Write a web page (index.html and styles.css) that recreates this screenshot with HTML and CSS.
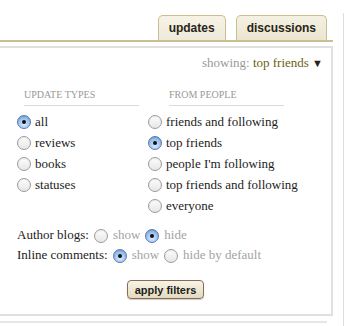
FILE: index.html
```html
<!DOCTYPE html>
<html lang="en">
<head>
    <meta charset="UTF-8">
    <meta name="viewport" content="width=device-width, initial-scale=1.0">
    <title>Updates Filter</title>
    <link rel="stylesheet" href="styles.css">
</head>
<body>

    <div class="page">
        <div class="main">
            <!-- Tabs -->
            <div class="tabs">
                <a href="#" class="tab active">updates</a>
                <a href="#" class="tab">discussions</a>
            </div>

            <!-- Filter panel -->
            <div class="panel">
                <div class="showing">showing: <a href="#">top friends</a> <span class="arrow">&#9660;</span></div>

                <div class="filters">
                    <div class="col col-types">
                        <h5>Update types</h5>
                        <label class="opt"><span class="radio on"></span>all</label>
                        <label class="opt"><span class="radio"></span>reviews</label>
                        <label class="opt"><span class="radio"></span>books</label>
                        <label class="opt"><span class="radio"></span>statuses</label>
                    </div>
                    <div class="col col-people">
                        <h5>From people</h5>
                        <label class="opt"><span class="radio"></span>friends and following</label>
                        <label class="opt"><span class="radio on"></span>top friends</label>
                        <label class="opt"><span class="radio"></span>people I'm following</label>
                        <label class="opt"><span class="radio"></span>top friends and following</label>
                        <label class="opt"><span class="radio"></span>everyone</label>
                    </div>
                </div>

                <div class="setting">
                    <span>Author blogs:</span>
                    <span class="radio"></span><span class="dim">show</span>
                    <span class="radio on"></span><span class="dim">hide</span>
                </div>
                <div class="setting">
                    <span>Inline comments:</span>
                    <span class="radio on"></span><span class="dim">show</span>
                    <span class="radio"></span><span class="dim">hide by default</span>
                </div>

                <div class="actions">
                    <button>apply filters</button>
                </div>
            </div>

            <div class="next"></div>
        </div>
        <div class="side"></div>
    </div>

</body>
</html>
```

FILE: styles.css
```css
body {
    font-family: "Liberation Serif", "Times New Roman", serif;
    font-size: 13px;
    color: #1c1c1c;
    margin: 0;
    padding: 0;
    background-color: white;
}

.page {
    display: flex;
    min-height: 326px;
}

.main {
    width: 333px;
}

.side {
    margin-left: 10px;
    margin-top: 13px;
    border-left: 1px solid #dedede;
}

/* Tabs */
.tabs {
    display: flex;
    justify-content: flex-end;
    gap: 10px;
    padding-top: 15px;
    padding-right: 6px;
    border-bottom: 2px solid #c9be94;
}

.tab {
    display: block;
    height: 24px;
    line-height: 25px;
    padding: 0 10px;
    font-family: "Liberation Sans", Arial, sans-serif;
    font-size: 12px;
    font-weight: bold;
    color: #2a2418;
    text-decoration: none;
    border: 1px solid #c9be94;
    border-bottom: none;
    border-radius: 5px 5px 0 0;
    background: linear-gradient(#f4f1e3, #ebe6cf);
}

.tab.active {
    background: linear-gradient(#f6f3e6, #eeeada);
}

/* Panel */
.panel {
    margin-top: 4px;
    border: 2px solid #e0e0e0;
    border-left: none;
    padding-bottom: 15px;
}

.showing {
    margin-top: 5px;
    line-height: 20px;
    text-align: right;
    padding-right: 8px;
    color: #999;
}

.showing a {
    color: #6b6210;
    text-decoration: none;
}

.showing .arrow {
    color: #2a2418;
    font-size: 11px;
}

.filters {
    display: flex;
    margin-top: 15px;
}

.col-types {
    margin-left: 17px;
    width: 131px;
}

.col-people {
    flex: 1;
}

.col h5 {
    font-size: 10px;
    font-weight: normal;
    text-transform: uppercase;
    color: #999;
    line-height: 14px;
    margin: 0 0 5px;
    padding-bottom: 3px;
    border-bottom: 1px solid #dadada;
    width: 115px;
}

.col-types h5 {
    margin-left: 7px;
}

.col-people h5 {
    margin-left: 21px;
}

.opt {
    display: flex;
    align-items: center;
    gap: 4px;
    height: 21px;
}

/* Radio buttons */
.radio {
    display: inline-block;
    width: 12px;
    height: 12px;
    border: 1px solid #9c9c9c;
    border-radius: 50%;
    background: linear-gradient(#fdfdfd, #e6e6e6);
    box-shadow: inset 0 1px 1px rgba(0, 0, 0, 0.08);
    position: relative;
    flex-shrink: 0;
}

.radio.on {
    border-color: #5a77a6;
    background: radial-gradient(circle at 50% 70%, #d8ebff, #8bb6ea 70%, #5d8fd4);
}

.radio.on::after {
    content: "";
    position: absolute;
    left: 4px;
    top: 4px;
    width: 4px;
    height: 4px;
    border-radius: 50%;
    background-color: #111;
}

/* Settings rows */
.setting {
    display: flex;
    align-items: center;
    margin-left: 17px;
    height: 20px;
}

.filters + .setting {
    margin-top: 9px;
}

.setting .radio {
    margin: 1px 5px 0 5px;
}

.setting .dim {
    color: #a3a3a3;
}

.actions {
    text-align: center;
    margin-top: 15px;
}

.actions button {
    height: 19px;
    padding: 0 7px;
    font-family: "Liberation Sans", Arial, sans-serif;
    font-size: 11px;
    font-weight: bold;
    color: #1e1e1e;
    border: 1px solid #8a6a55;
    border-radius: 4px;
    background: linear-gradient(#f8f4e6, #e2dbbf);
    box-shadow: 0 1px 1px rgba(0, 0, 0, 0.2);
    cursor: pointer;
}

.next {
    margin-top: 5px;
    width: 327px;
    border-top: 2px solid #e6e6e6;
}
```
